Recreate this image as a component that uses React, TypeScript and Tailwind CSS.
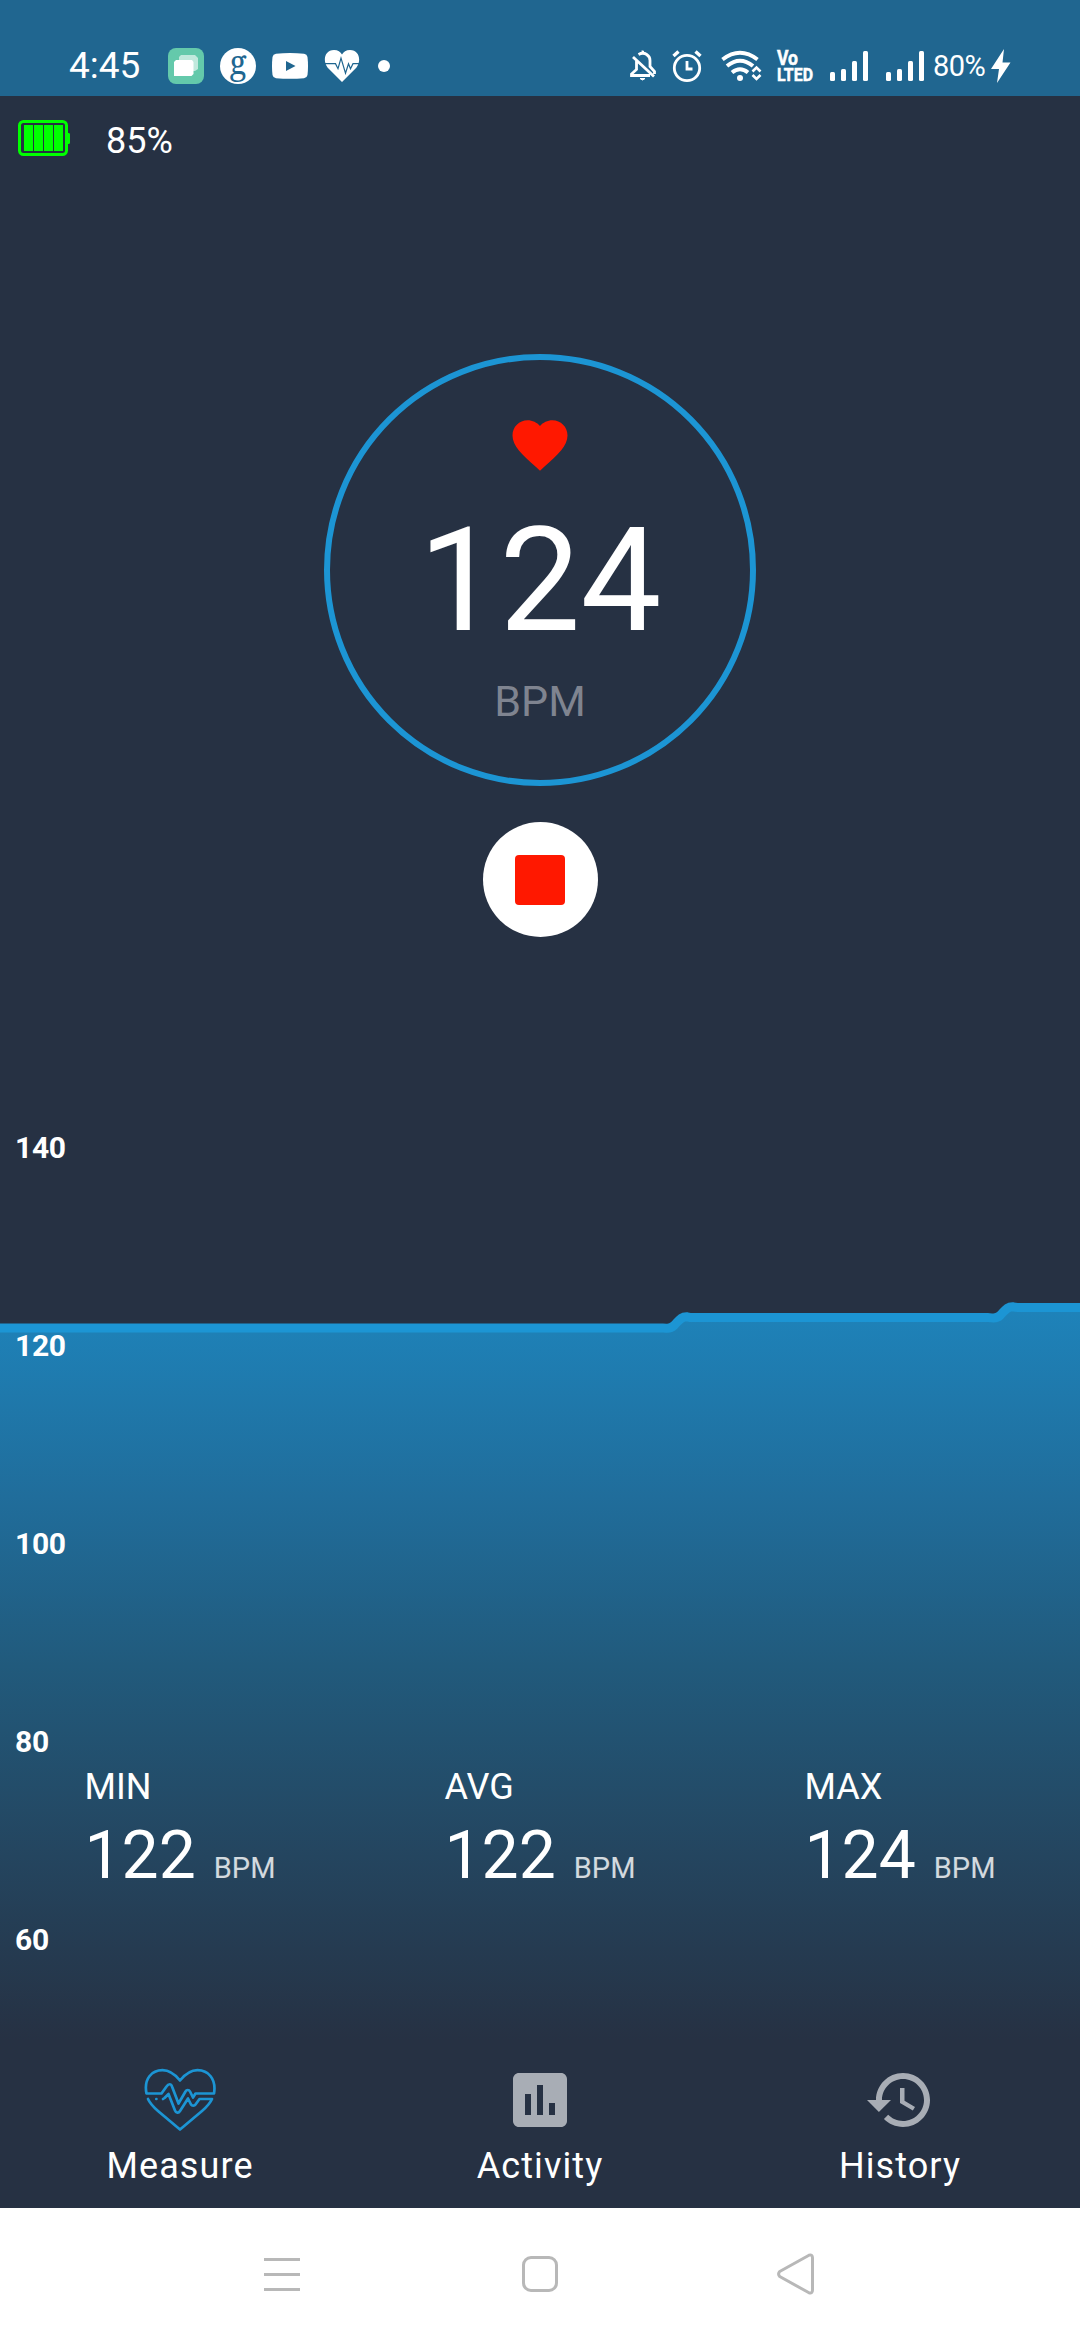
import React from "react";

const axisTicks = [140, 120, 100, 80, 60];

const stats = [
  { label: "MIN", value: 122 },
  { label: "AVG", value: 122 },
  { label: "MAX", value: 124 },
];

function SignalBars({ className }: { className: string }) {
  return (
    <svg className={className} height="36" viewBox="0 0 48 36" fill="white">
      <rect x="4" y="24" width="5" height="9" rx="1.5" />
      <rect x="15" y="21" width="5" height="12" rx="1.5" />
      <rect x="26" y="13" width="5" height="20" rx="1.5" />
      <rect x="37" y="3" width="5" height="30" rx="1.5" />
    </svg>
  );
}

function StatusBar() {
  return (
    <header className="flex h-24 items-center justify-between bg-[#206690] pt-9 text-white">
      <div className="flex items-center gap-4 pl-[69px]">
        <span className="w-[83px] text-[37px] leading-[44px]">4:45</span>
        <svg width="36" height="36" viewBox="0 0 36 36">
          <rect width="36" height="36" rx="8" fill="#64c9ab" />
          <path d="M13 7h14l3 3v11l-3 2H11V9z" fill="#c1e9dd" />
          <path d="M8 12h16l1.500 2v12l-2 2H6V14z" fill="white" />
        </svg>
        <div className="flex size-9 items-center justify-center rounded-full bg-white">
          <span className="-mt-2 font-['Noto_Serif','DejaVu_Serif','Liberation_Serif',serif] text-[32px] leading-9 text-[#206690]">g</span>
        </div>
        <svg width="36" height="36" viewBox="0 0 36 36">
          <path d="M4 5.800Q18 4.400 32 5.800Q35 6.200 35.500 9Q36.500 18 35.500 27Q35 29.800 32 30.200Q18 31.400 4 30.200Q1 29.800 .5 27Q-.5 18 .5 9Q1 6.200 4 5.800z" fill="white" />
          <path d="M14 13l9.500 5-9.500 5z" fill="#206690" />
        </svg>
        <svg width="36" height="36" viewBox="0 0 36 36">
          <path d="M18 34L3.500 19.500C-1.500 13 .5 2 10 2c4 0 6.500 1.800 8 4.500C19.500 3.800 22 2 26 2c9.500 0 11.500 11 6.500 17.500z" fill="white" />
          <path d="M1 15.700h10.500l2.500 5 3-10.500 4.500 15 3-9.500 2 5 2.500-5H35" fill="none" stroke="#206690" strokeWidth="1.200" />
        </svg>
        <span className="ml-0.5 size-3 rounded-full bg-white" />
      </div>
      <div className="flex w-[452px] items-center">
        <svg className="w-11" height="36" viewBox="0 0 44 36" fill="none" stroke="white" strokeWidth="2.800">
          <path d="M8.500 12v9.500L3.500 26v1.500H22M10.500 6.500C17 3 22 8 22 12.500v6l4.500 5V26M5 9l21 19.500" />
          <path d="M13.500 3h2v3M12 30.500q2.500 3 5 0z" fill="white" strokeWidth="1" />
        </svg>
        <svg className="w-12" height="36" viewBox="0 0 48 36" fill="none" stroke="white" strokeWidth="2.800">
          <circle cx="15" cy="20" r="12.700" />
          <path d="M15 13v8h5.500" />
          <path d="M1.500 8l5-4.500M28.500 8l-5-4.500" strokeWidth="3.400" />
        </svg>
        <svg className="w-[54px]" height="36" viewBox="0 0 54 36" fill="none" stroke="white">
          <g strokeWidth="4">
            <path d="M2.500 11.500Q20 -2 37.500 11.500" />
            <path d="M7 18Q20 7.500 33 18" />
            <path d="M12 24.500Q20 18 28 24.500" />
          </g>
          <circle cx="20" cy="30" r="3" fill="white" stroke="none" />
          <path d="M32.500 23.500l4-4 4 4M32.500 27l4 4 4-4" strokeWidth="2.600" />
        </svg>
        <svg className="w-[52px] overflow-visible" height="36" viewBox="0 0 52 36" fill="white" stroke="white" strokeWidth="0.5" fontFamily="Roboto, sans-serif" fontWeight="700">
          <text x="3" y="17" fontSize="19.5" textLength="21" lengthAdjust="spacingAndGlyphs">Vo</text>
          <text x="3" y="33" fontSize="19" textLength="36" lengthAdjust="spacingAndGlyphs">LTED</text>
        </svg>
        <SignalBars className="w-12 mr-2" />
        <SignalBars className="w-12" />
        <span className="w-[61px] pl-[3px] text-[29px] leading-9 tracking-[-0.5px]">80%</span>
        <svg width="20" height="36" viewBox="0 0 20 36" fill="white">
          <path d="M13 1L0 21h8L6 35 19.500 14.500H11.500z" />
        </svg>
      </div>
    </header>
  );
}

function DeviceBattery() {
  return (
    <div className="flex h-[90px] items-center pl-[18px]">
      <svg className="-mt-1.5" width="52" height="36" viewBox="0 0 52 36" fill="#00ff00">
        <rect x="1.500" y="1.500" width="47" height="33" rx="4" fill="none" stroke="#00ff00" strokeWidth="3" />
        <path d="M50 13h1.200l.8 1v9l-.8 1H50z" />
        <path d="M6 5h9v26H6zM16 5h9v26h-9zM26 5h9v26h-9zM36 5h9v26h-9z" />
      </svg>
      <span className="ml-9 text-[36px] leading-[42px]">85%</span>
    </div>
  );
}

function HeartRateDial() {
  return (
    <div className="mx-auto mt-[168px] flex size-[432px] flex-col items-center rounded-full border-[6px] border-[#1c95d4]">
      <svg className="mt-[51.500px]" width="66" height="66" viewBox="0 0 24 24" fill="#ff1800">
        <path d="M12 21.350l-1.450-1.320C5.400 15.360 2 12.280 2 8.500 2 5.420 4.420 3 7.500 3c1.740 0 3.410.81 4.500 2.090C13.090 3.810 14.760 3 16.500 3 19.580 3 22 5.420 22 8.500c0 3.780-3.400 6.860-8.550 11.540L12 21.350z" />
      </svg>
      <span className="mt-7 text-[144px] leading-[150px]">124</span>
      <span className="mt-5 text-[43px] leading-[50px] text-[#7f8490]">BPM</span>
    </div>
  );
}

function HeartRateChart() {
  const line =
    "M-10 391H663C668 391 670 392.500 674 388.500C679 383.500 681 379.500 687 379.800Q690 380.600 694 380.600H988C993 380.600 996 382.500 1000 378.500C1005 373.500 1007 369.500 1013 369.800Q1016 370.600 1020 370.600H1090";
  return (
    <section className="relative h-[1103px] pt-[111px]">
      <svg className="absolute inset-0" width="1080" height="1103" viewBox="0 0 1080 1103">
        <defs>
          <linearGradient id="area" gradientUnits="userSpaceOnUse" x1="0" y1="370" x2="0" y2="1103">
            <stop offset="0" stopColor="#1e83ba" />
            <stop offset="0.26" stopColor="#206d9b" />
            <stop offset="0.49" stopColor="#215a7c" />
            <stop offset="0.75" stopColor="#24455f" />
            <stop offset="1" stopColor="#263143" />
          </linearGradient>
        </defs>
        <path d={line + "V1103H-10z"} fill="url(#area)" />
        <path d={line} fill="none" stroke="#1c95d4" strokeWidth="9" />
      </svg>
      <div className="relative flex flex-col pl-[15px]">
        {axisTicks.map((tick) => (
          <span key={tick} className="flex h-[198px] items-center text-[30px] font-bold tracking-[-0.3px]">
            {tick}
          </span>
        ))}
      </div>
      <div className="absolute inset-x-0 top-[829px] grid grid-cols-3 justify-items-center">
        {stats.map((s) => (
          <div key={s.label} className="flex flex-col gap-[9px]">
            <span className="text-[36px] leading-[42px]">{s.label}</span>
            <div className="flex items-baseline gap-[18px]">
              <span className="text-[66px] leading-[78px]">{s.value}</span>
              <span className="text-[29px] text-white/80">BPM</span>
            </div>
          </div>
        ))}
      </div>
    </section>
  );
}

function MeasureIcon() {
  return (
    <svg width="72" height="72" viewBox="0 0 72 72" fill="none" stroke="#1c95d4" strokeWidth="2.700" strokeLinecap="round" strokeLinejoin="round">
      <path d="M2.500 29.500C-.5 14.500 8 6.200 18.500 6.200c8 0 13 4.800 17.500 10.300C40.500 11 45.500 6.200 53.500 6.200 64 6.200 72.500 14.500 70 29.500H51.500l-2.500 4-3-6c-1-2-3.500-2-4.500 0L34.500 39.500 28 22.500c-1-3-3.500-3-5.500 0L17.500 29.500z" />
      <path d="M4 35c2 4.500 6 8.500 10 12l22 18.500L58 47c4-3.500 8-7.500 10-12H55.500l-4 5.500c-1 1.500-3.500 1.500-4.500 0l-3-6-8 12.500c-1.500 2.500-4 2-5-.5L24.500 30l-4 4-1.500 1" />
      <path d="M12.300 35h.1" />
    </svg>
  );
}

function BottomNav() {
  return (
    <nav className="grid h-[168px] grid-cols-3 pt-6 text-[36px] leading-[42px] tracking-[1.1px]">
      <div className="flex flex-col items-center gap-[9px]">
        <MeasureIcon />
        <span>Measure</span>
      </div>
      <div className="flex flex-col items-center gap-[9px]">
        <svg width="72" height="72" viewBox="0 0 24 24" fill="#a8adb5">
          <path d="M19 3H5c-1.100 0-2 .9-2 2v14c0 1.100.9 2 2 2h14c1.100 0 2-.9 2-2V5c0-1.100-.9-2-2-2zM9 17H7v-7h2v7zm4 0h-2V7h2v10zm4 0h-2v-4h2v4z" />
        </svg>
        <span>Activity</span>
      </div>
      <div className="flex flex-col items-center gap-[9px]">
        <svg width="72" height="72" viewBox="0 0 24 24" fill="#a8adb5">
          <path d="M13 3c-4.970 0-9 4.030-9 9H1l3.890 3.890.07.14L9 12H6c0-3.870 3.130-7 7-7s7 3.130 7 7-3.130 7-7 7c-1.930 0-3.680-.79-4.940-2.060l-1.420 1.420C8.270 19.990 10.510 21 13 21c4.970 0 9-4.030 9-9s-4.030-9-9-9zm-1 5v5l4.280 2.540.72-1.210-3.500-2.080V8H12z" />
        </svg>
        <span>History</span>
      </div>
    </nav>
  );
}

function SystemNav() {
  return (
    <footer className="flex h-[132px] items-center bg-white pl-[264px]">
      <svg width="36" height="40" viewBox="0 0 36 40" fill="#b8b8b8">
        <path d="M0 4h36v3H0zM0 19h36v3H0zM0 34h36v3H0z" />
      </svg>
      <span className="ml-[222px] size-9 rounded-[9px] border-[3px] border-[#b8b8b8]" />
      <svg className="ml-[219px]" width="37" height="42" viewBox="0 0 37 42" fill="none" stroke="#b8b8b8" strokeWidth="3" strokeLinejoin="round">
        <path d="M2.700 18.500L32 2.200Q35.500 1 35.500 5V37Q35.500 41 32 39.800L2.700 23.500Q.5 21 2.700 18.500z" />
      </svg>
    </footer>
  );
}

export default function App() {
  return (
    <div className="flex h-[2340px] w-[1080px] flex-col overflow-hidden bg-[#263143] font-[Roboto,sans-serif] text-white">
      <StatusBar />
      <main>
        <DeviceBattery />
        <HeartRateDial />
        <button className="mx-auto mt-9 flex size-[115px] items-center justify-center rounded-full bg-white">
          <span className="size-[50px] rounded bg-[#ff1800]" />
        </button>
        <HeartRateChart />
      </main>
      <BottomNav />
      <SystemNav />
    </div>
  );
}
